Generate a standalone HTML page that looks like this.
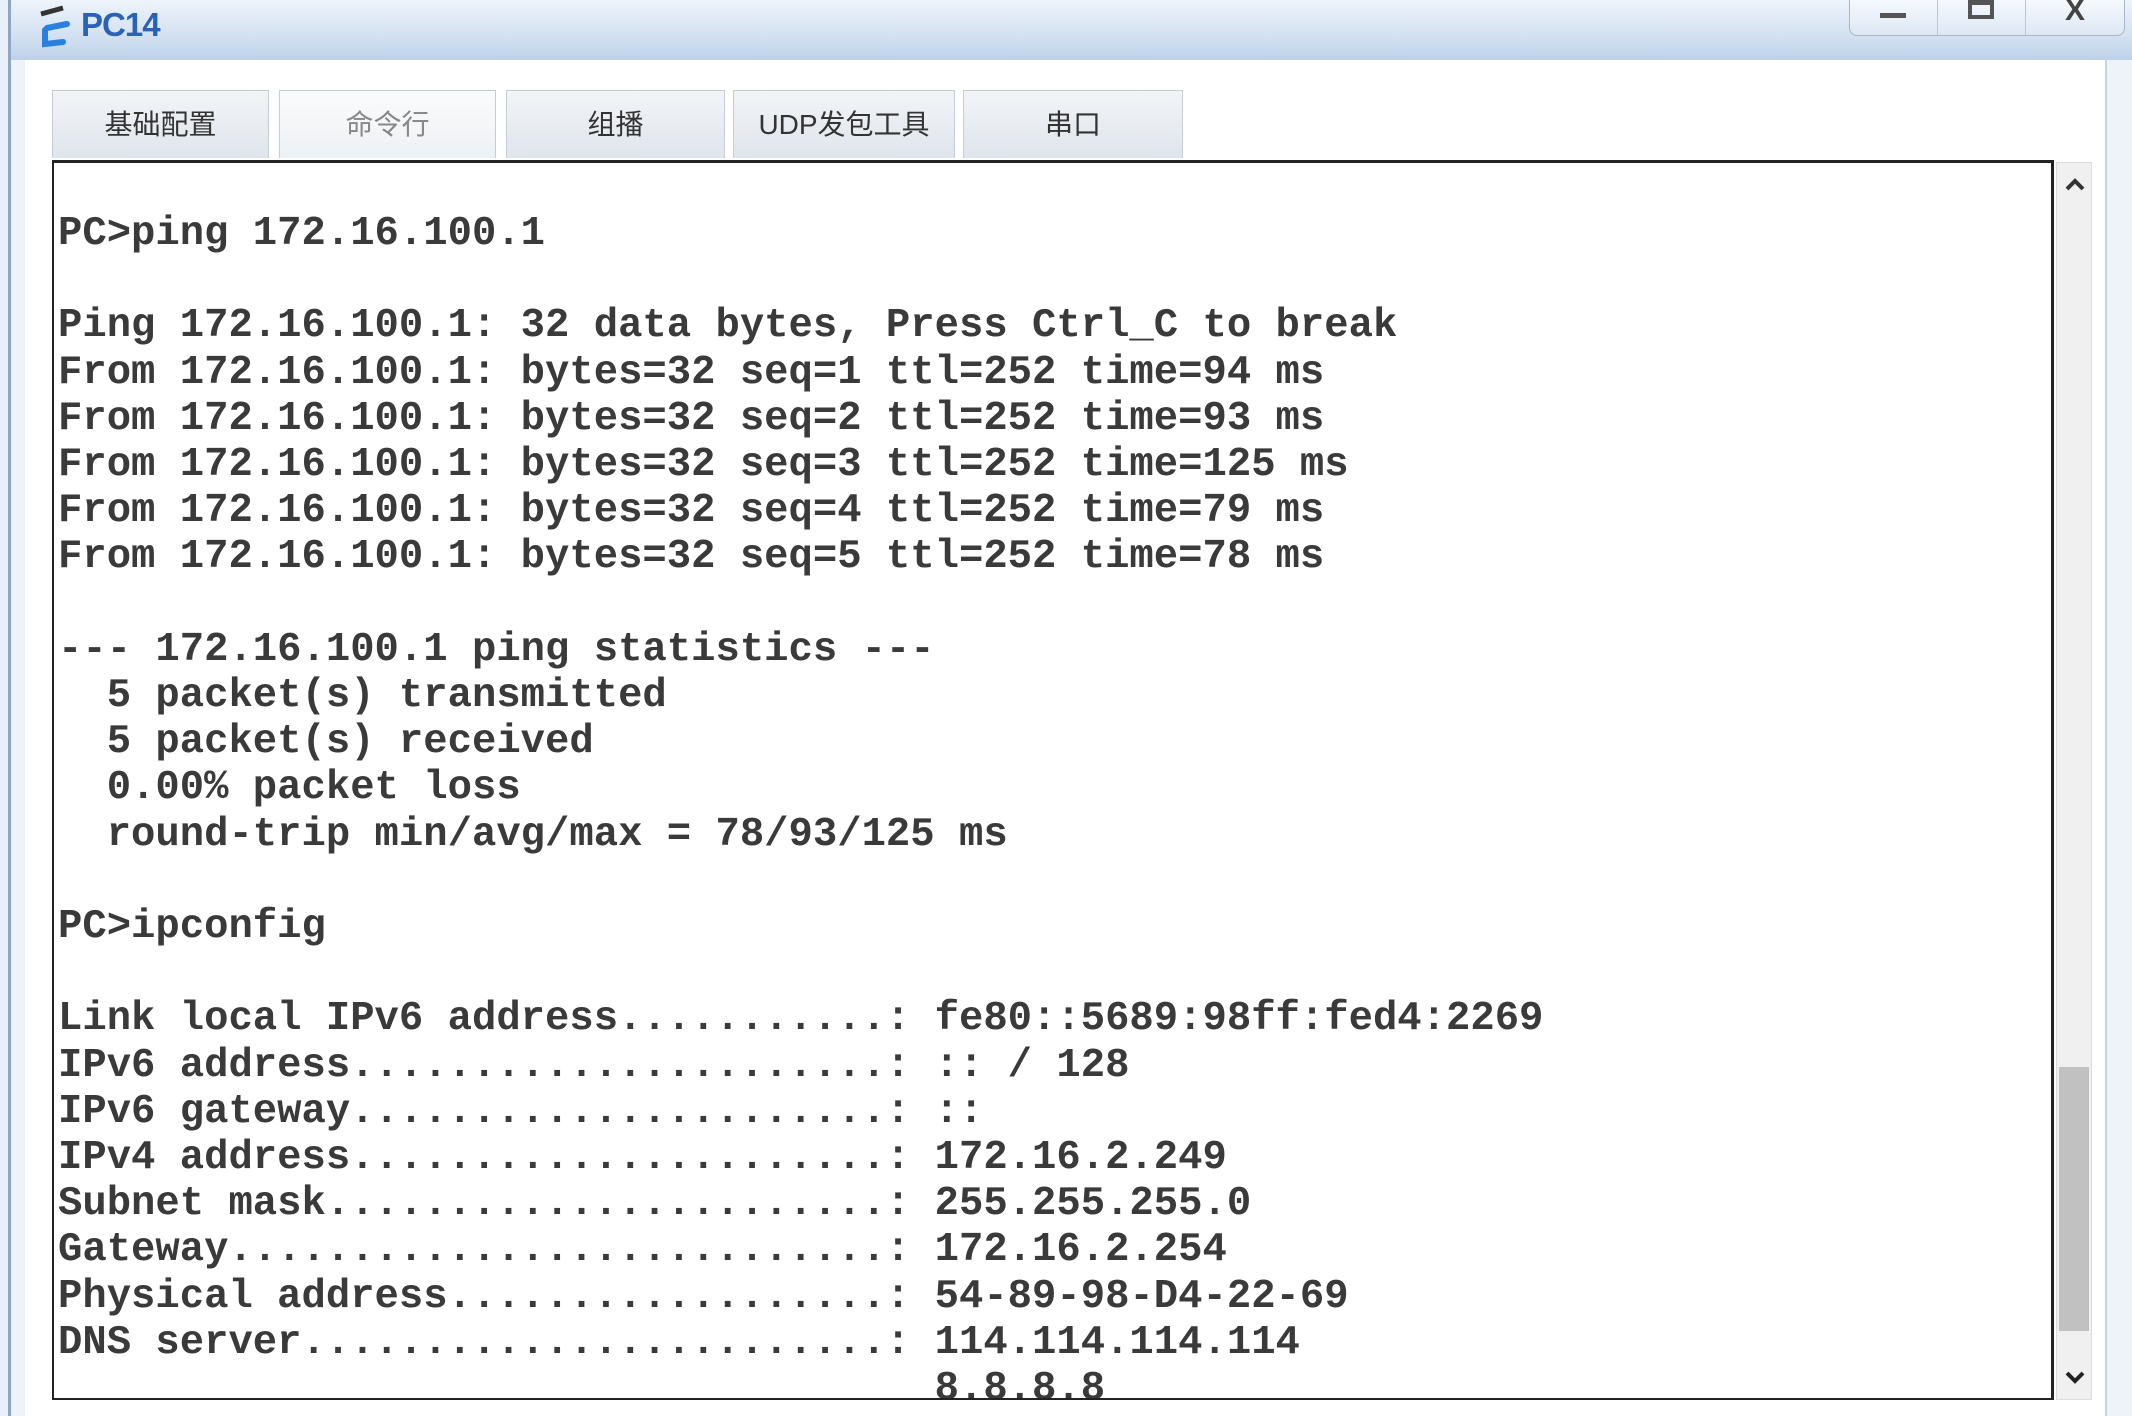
<!DOCTYPE html>
<html><head><meta charset="utf-8"><style>
*{margin:0;padding:0;box-sizing:border-box}
html,body{width:2132px;height:1416px;overflow:hidden;background:#e9f0fa}
.win{position:absolute;left:8px;top:0;width:2124px;height:1416px;border-left:3px solid #8fa6c2;background:#eef3fa}
.title{position:absolute;left:0;top:0;width:100%;height:60px;background:linear-gradient(#eef4fb,#d3e1f1 60%,#bcd2ea)}
.title .t{position:absolute;left:70px;top:6px;font:bold 33px "Liberation Sans",sans-serif;color:#2a62b8;letter-spacing:-1px}
.ctl{position:absolute;left:1838px;top:-4px;width:276px;height:40px;border:1px solid #a7b6c8;border-radius:0 0 8px 8px;background:linear-gradient(#f8fbff,#dde7f3)}
.ctl div{position:absolute;top:0;height:38px;border-right:1px solid #b8c6d6}
.client{position:absolute;left:14px;top:60px;width:2082px;height:1356px;background:#fff;border-right:2px solid #c9d4e2}
.tab{position:absolute;top:90px;height:68px;border:1px solid #c6ccd4;border-bottom:none;background:linear-gradient(#f2f4f7,#dfe5ec);font:28px "Liberation Sans","Noto Sans CJK SC",sans-serif;color:#333;text-align:center;line-height:68px}
.term{position:absolute;left:52px;top:160px;width:2002px;height:1240px;border:2px solid #222;border-top:3px solid #222;border-right:3px solid #222;background:#fff;overflow:hidden}
pre{position:absolute;left:4px;top:48px;font:bold 40.6px/46.2px "Liberation Mono",monospace;color:#3a3a3a;white-space:pre}
.sb{position:absolute;left:2056px;top:162px;width:36px;height:1238px;background:#f0f0f0;border:1px solid #dcdcdc}
.thumb{position:absolute;left:2px;top:904px;width:30px;height:264px;background:#c1c1c1}
</style></head><body>
<div class="win">
<div class="title">
<svg style="position:absolute;left:22px;top:4px" width="46" height="50" viewBox="0 0 46 50"><path d="M8 10 L30 4" stroke="#333" stroke-width="5" fill="none"/><path d="M14 24 L34 20 M12 26 L12 40 L30 38" stroke="#2b7fe0" stroke-width="6" fill="none" stroke-linecap="round"/></svg>
<div class="t">PC14</div>
<div class="ctl"><div style="left:0;width:88px"><span style="position:absolute;left:30px;top:16px;width:26px;height:5px;background:#555"></span></div><div style="left:88px;width:88px"><span style="position:absolute;left:30px;top:2px;width:26px;height:20px;border:4px solid #555;border-top-width:6px"></span></div><div style="left:176px;width:98px;border:none;font:bold 30px 'Liberation Sans',sans-serif;color:#444;text-align:center;line-height:28px">X</div></div>
</div>
<div class="client"></div>
</div>
<div class="tab" style="left:52px;width:217px">基础配置</div>
<div class="tab" style="left:279px;width:217px;color:#888;background:linear-gradient(#fafbfc,#eef1f4)">命令行</div>
<div class="tab" style="left:506px;width:219px">组播</div>
<div class="tab" style="left:733px;width:222px">UDP发包工具</div>
<div class="tab" style="left:963px;width:220px">串口</div>
<div class="term"><pre>PC&gt;ping 172.16.100.1

Ping 172.16.100.1: 32 data bytes, Press Ctrl_C to break
From 172.16.100.1: bytes=32 seq=1 ttl=252 time=94 ms
From 172.16.100.1: bytes=32 seq=2 ttl=252 time=93 ms
From 172.16.100.1: bytes=32 seq=3 ttl=252 time=125 ms
From 172.16.100.1: bytes=32 seq=4 ttl=252 time=79 ms
From 172.16.100.1: bytes=32 seq=5 ttl=252 time=78 ms

--- 172.16.100.1 ping statistics ---
  5 packet(s) transmitted
  5 packet(s) received
  0.00% packet loss
  round-trip min/avg/max = 78/93/125 ms

PC&gt;ipconfig

Link local IPv6 address...........: fe80::5689:98ff:fed4:2269
IPv6 address......................: :: / 128
IPv6 gateway......................: ::
IPv4 address......................: 172.16.2.249
Subnet mask.......................: 255.255.255.0
Gateway...........................: 172.16.2.254
Physical address..................: 54-89-98-D4-22-69
DNS server........................: 114.114.114.114
                                    8.8.8.8</pre></div>
<div class="sb"><svg style="position:absolute;left:7px;top:14px" width="22" height="16"><path d="M3 12 L11 4 L19 12" stroke="#333" stroke-width="4" fill="none"/></svg><div class="thumb"></div><svg style="position:absolute;left:7px;top:1206px" width="22" height="16"><path d="M3 4 L11 12 L19 4" stroke="#222" stroke-width="4" fill="none"/></svg></div>
</body></html>
